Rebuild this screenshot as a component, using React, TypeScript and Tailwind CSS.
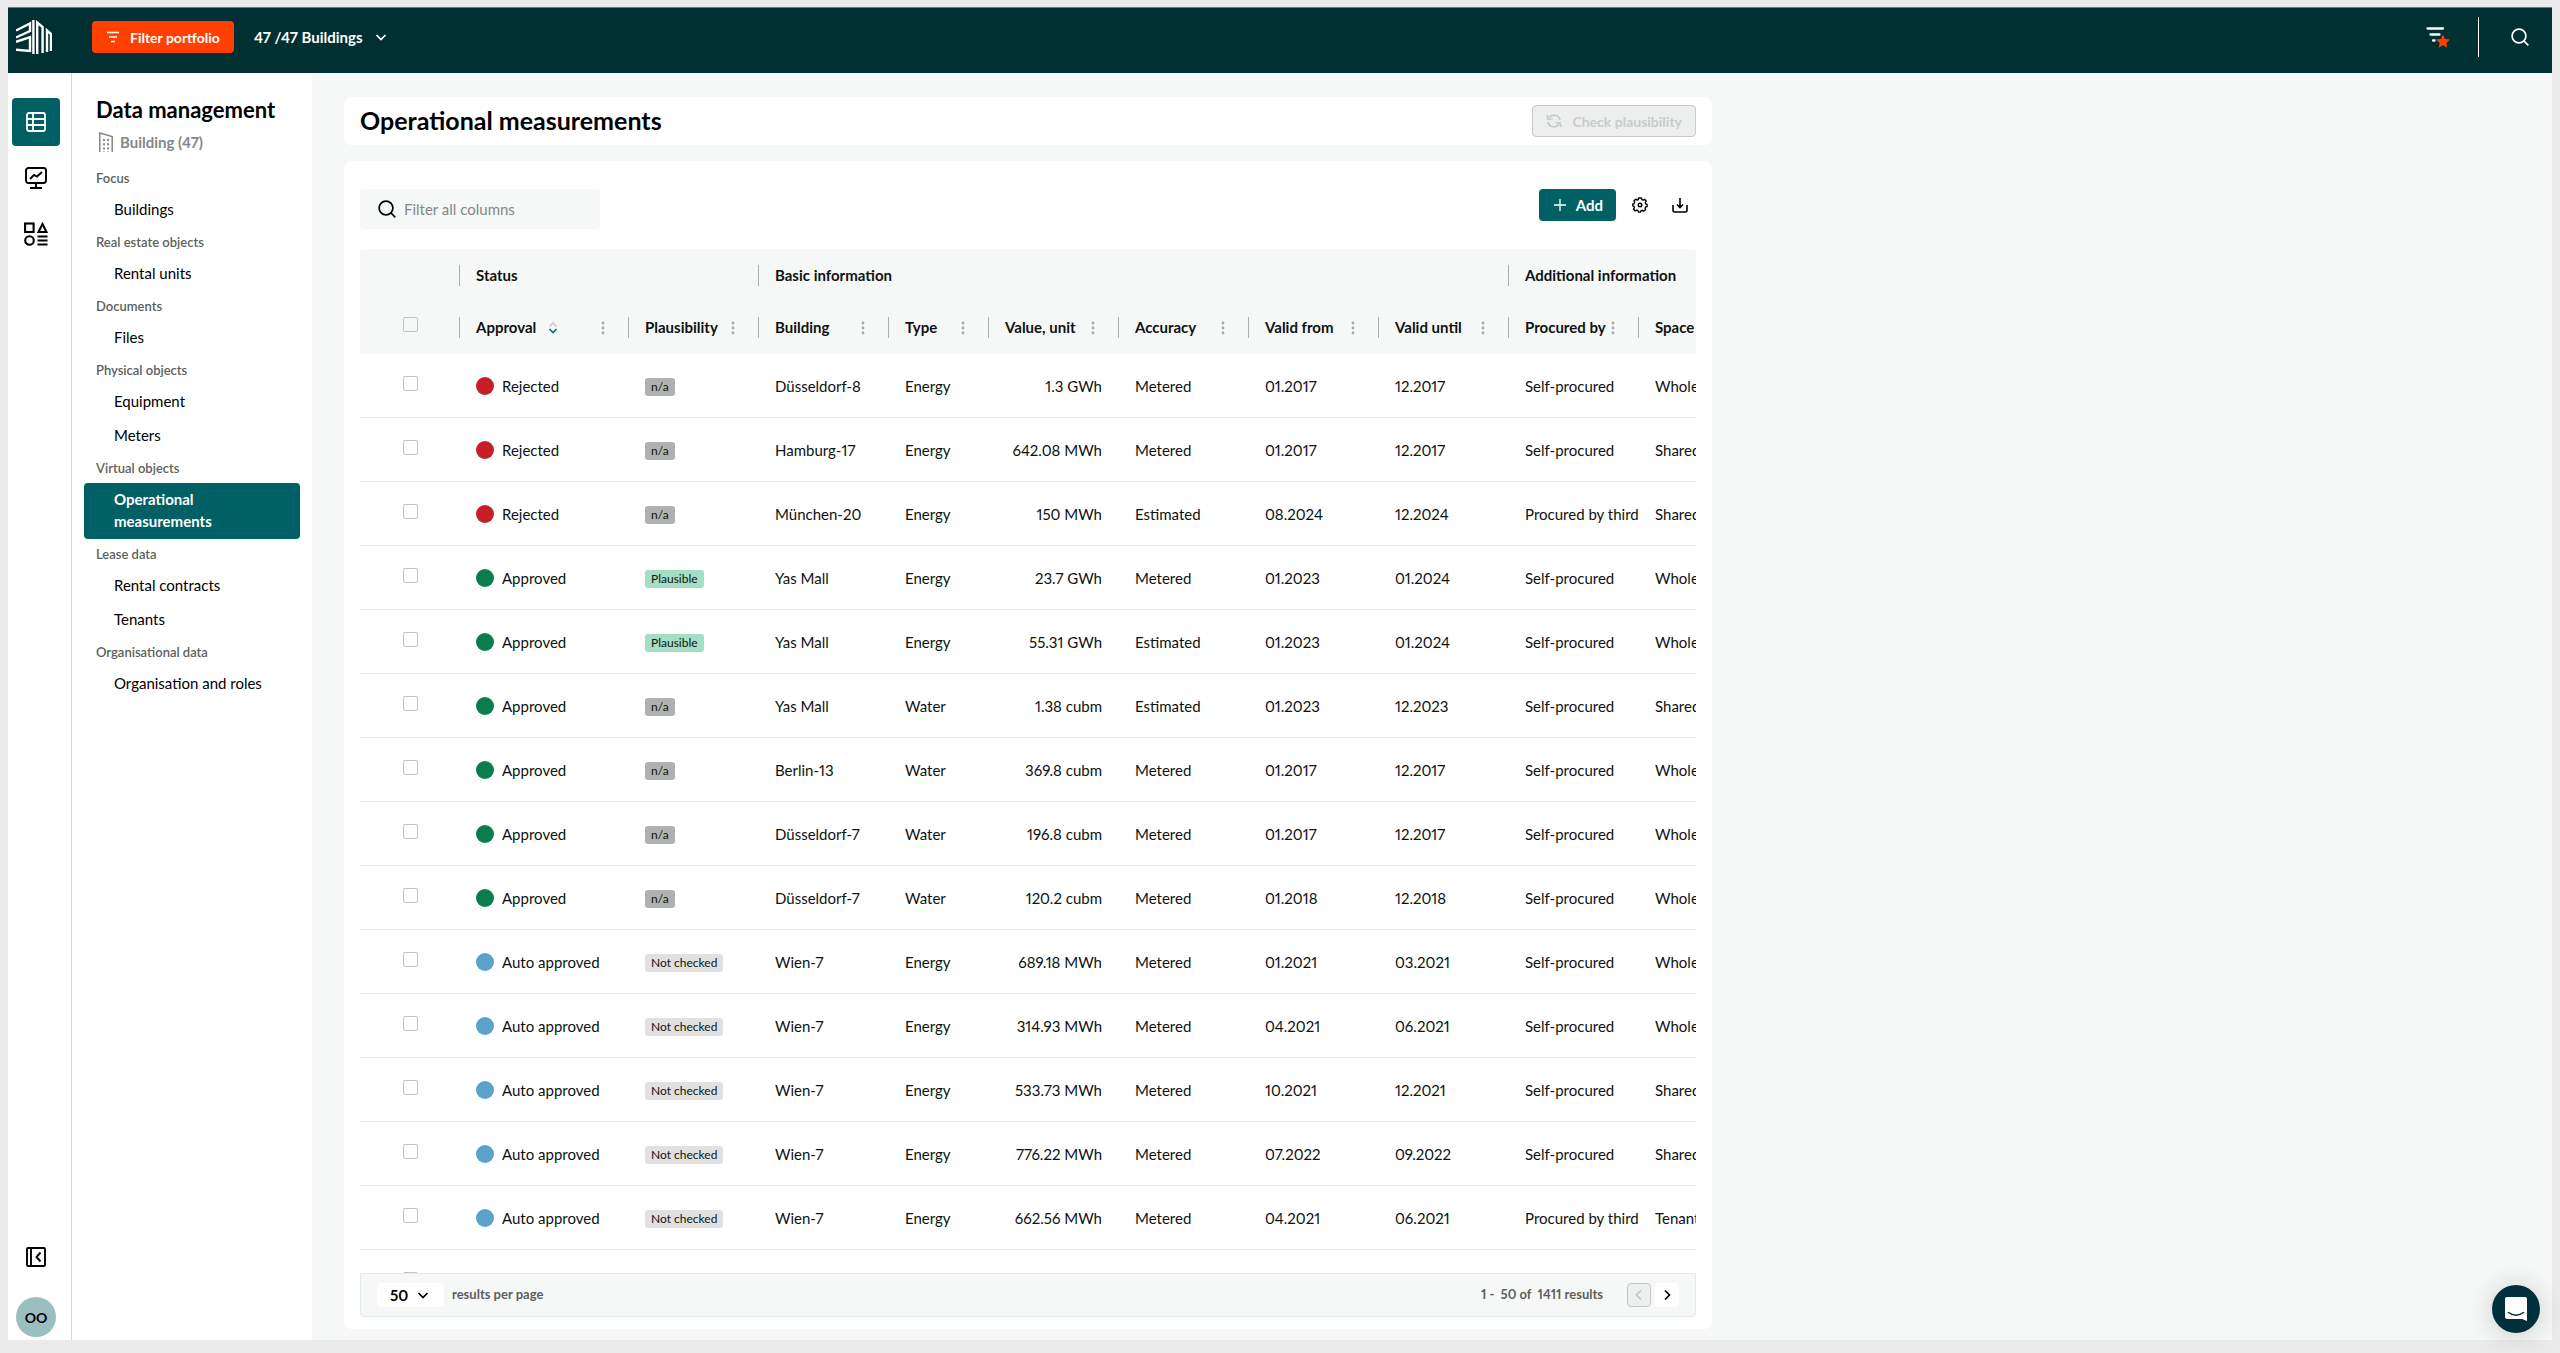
import type { ReactNode } from "react";

type Approval = "Rejected" | "Approved" | "Auto approved";
type Plausibility = "n/a" | "Plausible" | "Not checked";
type Row = [Approval, Plausibility, string, string, string, string, string, string, string, string];

const rows: Row[] = [
  ["Rejected", "n/a", "Düsseldorf-8", "Energy", "1.3 GWh", "Metered", "01.2017", "12.2017", "Self-procured", "Whole"],
  ["Rejected", "n/a", "Hamburg-17", "Energy", "642.08 MWh", "Metered", "01.2017", "12.2017", "Self-procured", "Shared"],
  ["Rejected", "n/a", "München-20", "Energy", "150 MWh", "Estimated", "08.2024", "12.2024", "Procured by third", "Shared"],
  ["Approved", "Plausible", "Yas Mall", "Energy", "23.7 GWh", "Metered", "01.2023", "01.2024", "Self-procured", "Whole"],
  ["Approved", "Plausible", "Yas Mall", "Energy", "55.31 GWh", "Estimated", "01.2023", "01.2024", "Self-procured", "Whole"],
  ["Approved", "n/a", "Yas Mall", "Water", "1.38 cubm", "Estimated", "01.2023", "12.2023", "Self-procured", "Shared"],
  ["Approved", "n/a", "Berlin-13", "Water", "369.8 cubm", "Metered", "01.2017", "12.2017", "Self-procured", "Whole"],
  ["Approved", "n/a", "Düsseldorf-7", "Water", "196.8 cubm", "Metered", "01.2017", "12.2017", "Self-procured", "Whole"],
  ["Approved", "n/a", "Düsseldorf-7", "Water", "120.2 cubm", "Metered", "01.2018", "12.2018", "Self-procured", "Whole"],
  ["Auto approved", "Not checked", "Wien-7", "Energy", "689.18 MWh", "Metered", "01.2021", "03.2021", "Self-procured", "Whole"],
  ["Auto approved", "Not checked", "Wien-7", "Energy", "314.93 MWh", "Metered", "04.2021", "06.2021", "Self-procured", "Whole"],
  ["Auto approved", "Not checked", "Wien-7", "Energy", "533.73 MWh", "Metered", "10.2021", "12.2021", "Self-procured", "Shared"],
  ["Auto approved", "Not checked", "Wien-7", "Energy", "776.22 MWh", "Metered", "07.2022", "09.2022", "Self-procured", "Shared"],
  ["Auto approved", "Not checked", "Wien-7", "Energy", "662.56 MWh", "Metered", "04.2021", "06.2021", "Procured by third", "Tenant"],
];

const dotColor: Record<Approval, string> = {
  Rejected: "bg-[#c61d27]",
  Approved: "bg-[#0a7d4b]",
  "Auto approved": "bg-[#5ba4c9]",
};

const badgeColor: Record<Plausibility, string> = {
  "n/a": "bg-[#b0b2b1]",
  Plausible: "bg-[#a3dfc4]",
  "Not checked": "bg-[#e1e1e1]",
};

const nav: { title: string; items: string[] }[] = [
  { title: "Focus", items: ["Buildings"] },
  { title: "Real estate objects", items: ["Rental units"] },
  { title: "Documents", items: ["Files"] },
  { title: "Physical objects", items: ["Equipment", "Meters"] },
  { title: "Virtual objects", items: ["Operational measurements"] },
  { title: "Lease data", items: ["Rental contracts", "Tenants"] },
  { title: "Organisational data", items: ["Organisation and roles"] },
];

const columns = ["Approval", "Plausibility", "Building", "Type", "Value, unit", "Accuracy", "Valid from", "Valid until", "Procured by", "Space"];

function Logo() {
  return (
    <svg width="36" height="34" viewBox="0 0 36 34" fill="none" stroke="#fff" strokeWidth="2.400" aria-hidden="true">
      <path d="M0 10.500L14 3.500V11L0 17.500M0 21.800L14 17.200V31L0 29.800" />
      <path d="M17.400 0V34M21.200 34V2.500L26.600 7V33M31 32V10.500L35 14V31" />
    </svg>
  );
}

function SearchIcon({ size }: { size: number }) {
  return (
    <svg width={size} height={size} viewBox="0 0 18 18" fill="none" stroke="currentColor" strokeWidth="1.700" className="shrink-0" aria-hidden="true">
      <circle cx="8" cy="8" r="6.900" />
      <path d="M13 13l4.300 4.300" />
    </svg>
  );
}

function Chevron({ dir }: { dir: "down" | "left" | "right" }) {
  const d = dir === "down" ? "M1.500 4l4.500 4.500L10.500 4" : dir === "left" ? "M8 1.500L3.500 6 8 10.500" : "M4 1.500L8.500 6 4 10.500";
  return (
    <svg width="12" height="12" viewBox="0 0 12 12" fill="none" stroke="currentColor" strokeWidth="1.700" aria-hidden="true">
      <path d={d} />
    </svg>
  );
}

function Dots() {
  return (
    <button type="button" aria-label="Column menu" className="flex h-[21px] w-2 items-center justify-center text-[#a5a7a6]">
      <svg width="4" height="14" viewBox="0 0 4 14" fill="currentColor" aria-hidden="true">
        <circle cx="2" cy="2" r="1.400" />
        <circle cx="2" cy="7" r="1.400" />
        <circle cx="2" cy="12" r="1.400" />
      </svg>
    </button>
  );
}

function Check({ label }: { label: string }) {
  return (
    <input
      type="checkbox"
      aria-label={label}
      className="block size-[15px] appearance-none rounded-[2px] border border-[#c3c5c4] bg-transparent"
    />
  );
}

function RailButton({ label, active, children }: { label: string; active?: boolean; children: ReactNode }) {
  return (
    <button
      type="button"
      aria-label={label}
      className={active ? "flex size-12 items-center justify-center rounded bg-[#006064] text-white" : "flex size-12 items-center justify-center rounded text-black"}
    >
      {children}
    </button>
  );
}

function TopBar() {
  return (
    <header className="flex h-[66px] shrink-0 items-center border-t border-[#5f7f80] bg-[#003032] pr-[23px] pb-[7px] pl-2 text-[14px] font-bold text-white">
      <a href="#" aria-label="Home" className="flex w-[76px]">
        <Logo />
      </a>
      <button type="button" className="flex h-8 items-center gap-[11px] rounded bg-[#ff4000] pr-[14px] pl-[15px]">
        <svg width="12" height="12" viewBox="0 0 12 12" stroke="currentColor" strokeWidth="1.500" aria-hidden="true">
          <path d="M0 1.500h12M2 6h8M4 10.500h4" />
        </svg>
        Filter portfolio
      </button>
      <button type="button" className="ml-5 flex h-8 items-center gap-3">
        <span className="text-[15px]">47 /47 Buildings</span>
        <Chevron dir="down" />
      </button>
      <div className="ml-auto flex items-center">
        <button type="button" aria-label="Saved filters" className="flex">
          <svg width="24" height="22" viewBox="0 0 24 22" fill="none" aria-hidden="true">
            <path d="M1.500 2.500h15.500M4.500 8.500h9M7 14.500h1.500" stroke="#fff" strokeWidth="2.300" strokeLinecap="round" />
            <path d="M17 8.500l2 4.600 5 .5-3.700 3.300 1 4.900-4.300-2.600-4.300 2.600 1-4.900-3.700-3.300 5-.5z" fill="#ff4000" />
          </svg>
        </button>
        <span className="mr-8 ml-7 h-10 w-px bg-white" />
        <button type="button" aria-label="Search" className="flex">
          <SearchIcon size={18} />
        </button>
      </div>
    </header>
  );
}

function Rail() {
  return (
    <nav aria-label="Main" className="flex w-16 shrink-0 flex-col items-center gap-2 border-r border-[#cddcdb] bg-white pt-[25px] pr-[11px] pb-[3px] pl-1">
      <RailButton label="Data management" active>
        <svg width="20" height="20" viewBox="0 0 20 20" fill="none" stroke="currentColor" strokeWidth="1.800" aria-hidden="true">
          <rect x="1" y="1" width="18" height="18" rx="2" />
          <path d="M7 1v18M1 7h18M1 13h18" />
        </svg>
      </RailButton>
      <RailButton label="Dashboards">
        <svg width="22" height="22" viewBox="0 0 22 22" fill="none" stroke="currentColor" strokeWidth="1.900" aria-hidden="true">
          <rect x="1" y="1" width="20" height="15" rx="2.500" />
          <path d="M5 12l4-4 3 1.500L17 5M11 16v4.500M5 21h12" />
        </svg>
      </RailButton>
      <RailButton label="Objects">
        <svg width="24" height="24" viewBox="0 0 24 24" fill="none" stroke="currentColor" strokeWidth="2.100" aria-hidden="true">
          <rect x="1.100" y="1.500" width="8.500" height="8.500" />
          <path d="M18.500 2l4 8h-8zM13.500 14.500h10M13.500 18.500h10M13.500 22.500h10" />
          <circle cx="5.500" cy="18.500" r="4.300" />
        </svg>
      </RailButton>
      <div className="mt-auto flex flex-col items-center gap-4">
        <RailButton label="Collapse navigation">
          <svg width="20" height="20" viewBox="0 0 20 20" fill="none" stroke="currentColor" strokeWidth="1.900" aria-hidden="true">
            <rect x="1" y="1" width="18" height="18" rx="1" />
            <path d="M5 1v18M14.500 5.500L10.500 10l4 4.500" />
          </svg>
        </RailButton>
        <button type="button" className="flex size-10 items-center justify-center rounded-full bg-[#9bbfc0] text-[14px] font-bold text-black">
          OO
        </button>
      </div>
    </nav>
  );
}

function SideNav() {
  return (
    <aside className="w-60 shrink-0 overflow-hidden bg-white px-3 pt-[23px]">
      <h2 className="px-3 text-[22px] leading-7 font-bold text-black">Data management</h2>
      <div className="flex h-9 items-center gap-[7px] px-3 text-[15px] font-bold text-[#858786]">
        <svg width="14" height="20" viewBox="0 0 14 20" fill="none" stroke="currentColor" strokeWidth="1.500" className="ml-[3px]" aria-hidden="true">
          <path d="M.800 20V1L13.200 4.500V20" />
          <path d="M5 7v13M9 7v13" strokeDasharray="2 2.200" strokeWidth="2" />
        </svg>
        Building (47)
      </div>
      <div className="pt-[3px]">
        {nav.map((group) => (
          <section key={group.title}>
            <h3 className="px-3 text-[13px] leading-[30px] font-semibold text-[#5d5f5e]">{group.title}</h3>
            <ul>
              {group.items.map((item) => (
                <li key={item}>
                  <a
                    href="#"
                    aria-current={item === "Operational measurements" ? "page" : undefined}
                    className={
                      item === "Operational measurements"
                        ? "block rounded bg-[#006064] pt-[5px] pr-16 pb-[7px] pl-[30px] text-[15px] leading-[22px] font-bold text-white"
                        : "block rounded pt-[5px] pr-2 pb-[7px] pl-[30px] text-[15px] leading-[22px] text-black"
                    }
                  >
                    {item}
                  </a>
                </li>
              ))}
            </ul>
          </section>
        ))}
      </div>
    </aside>
  );
}

function GroupHead({ span, children }: { span: number; children: string }) {
  return (
    <th colSpan={span} scope="colgroup" className="p-0 font-bold">
      <div className="flex h-[21px] items-center border-l border-[#adafae] pl-4">{children}</div>
    </th>
  );
}

function MeasurementsTable() {
  return (
    <table className="w-[1408px] table-fixed border-separate border-spacing-0 text-left text-[15px] whitespace-nowrap text-[#0e1211]">
      <colgroup>
        <col className="w-[99px]" />
        <col className="w-[169px]" />
        <col className="w-[130px]" />
        <col className="w-[130px]" />
        <col className="w-[100px]" />
        <col className="w-[130px]" />
        <col className="w-[130px]" />
        <col className="w-[130px]" />
        <col className="w-[130px]" />
        <col className="w-[130px]" />
        <col className="w-[130px]" />
      </colgroup>
      <thead className="bg-[#f6f8f7]">
        <tr className="h-[52px]">
          <td className="p-0" />
          <GroupHead span={2}>Status</GroupHead>
          <GroupHead span={6}>Basic information</GroupHead>
          <GroupHead span={2}>Additional information</GroupHead>
        </tr>
        <tr className="h-[53px]">
          <th className="pt-0 pr-0 pb-1.5 pl-[43px]">
            <Check label="Select all rows" />
          </th>
          {columns.map((name) => (
            <th key={name} scope="col" className="p-0 font-bold">
              <div className="flex h-[21px] items-center border-l border-[#adafae] pr-[21px] pl-4">
                {name}
                {name === "Approval" && (
                  <svg width="10" height="12" viewBox="0 0 10 12" fill="none" strokeWidth="1.400" className="ml-3" aria-hidden="true">
                    <path d="M1.500 4.500L5 1l3.500 3.500" stroke="#c3c5c4" />
                    <path d="M1.500 7L5 10.500 8.500 7" stroke="#00787a" strokeWidth="1.700" />
                  </svg>
                )}
                <span className="ml-auto">
                  <Dots />
                </span>
              </div>
            </th>
          ))}
        </tr>
      </thead>
      <tbody className="[&_td]:border-b [&_td]:border-[#e4ecea]">
        {rows.map(([approval, plausibility, building, type, value, accuracy, from, until, procured, space], i) => (
          <tr key={i} className="h-16">
            <td className="pt-0 pr-0 pb-1 pl-[43px]">
              <Check label={`Select row ${i + 1}`} />
            </td>
            <td className="p-0 pt-px pl-[17px]">
              <span className="flex items-center gap-2">
                <span className={`size-[18px] rounded-full ${dotColor[approval]}`} />
                {approval}
              </span>
            </td>
            <td className="p-0 pt-0.5 pl-[17px]">
              <span className={`flex h-[18px] w-fit items-center rounded-[3px] px-1.5 text-[12px] ${badgeColor[plausibility]}`}>{plausibility}</span>
            </td>
            <td className="p-0 pt-px pl-[17px]">{building}</td>
            <td className="p-0 pt-px pl-[17px]">{type}</td>
            <td className="p-0 pt-px pr-4 text-right">{value}</td>
            <td className="p-0 pt-px pl-[17px]">{accuracy}</td>
            <td className="p-0 pt-px pl-[17px]">{from}</td>
            <td className="p-0 pt-px pl-[17px]">{until}</td>
            <td className="p-0 pt-px pl-[17px]">{procured}</td>
            <td className="p-0 pt-px pl-[17px]">{space}</td>
          </tr>
        ))}
        <tr className="h-16">
          <td className="pt-0 pr-0 pb-1 pl-[43px]">
            <Check label="Select row 15" />
          </td>
          <td colSpan={10} />
        </tr>
      </tbody>
    </table>
  );
}

function Pager() {
  return (
    <footer className="flex h-11 shrink-0 items-center rounded-b border border-[#e4ecea] bg-[#f6f8f7] px-4 text-[13px] font-bold text-[#5d5f5e]">
      <label className="flex items-center gap-2">
        <span className="relative flex h-6 w-[67px] items-center rounded bg-white text-[15px] text-black">
          <select defaultValue="50" className="h-6 w-full appearance-none pl-[13px] font-bold">
            <option>25</option>
            <option>50</option>
            <option>100</option>
          </select>
          <span className="pointer-events-none absolute right-[15px]">
            <Chevron dir="down" />
          </span>
        </span>
        results per page
      </label>
      <span className="ml-auto whitespace-pre">1 -  50 of  1411 results</span>
      <button type="button" disabled aria-label="Previous page" className="ml-6 flex size-6 items-center justify-center rounded border border-[#c3c5c4] bg-[#edefee] text-[#c3c5c4]">
        <Chevron dir="left" />
      </button>
      <button type="button" aria-label="Next page" className="ml-1 flex size-6 items-center justify-center rounded bg-white text-black">
        <Chevron dir="right" />
      </button>
    </footer>
  );
}

export default function App() {
  return (
    <div className="h-screen bg-[#ebebeb] px-2 pt-[7px] pb-[13px] font-['Lato',sans-serif] proportional-nums">
      <div className="flex h-full flex-col bg-[#f6f8f7]">
        <TopBar />
        <div className="flex min-h-0 flex-1">
          <Rail />
          <SideNav />
          <main className="flex min-w-0 flex-1 flex-col gap-4 px-8 pt-6 pb-[11px]">
            <div className="flex h-12 w-full max-w-[1368px] shrink-0 items-center justify-between rounded-lg bg-white px-4">
              <h1 className="pb-[3px] text-[25px] leading-8 font-bold text-black">Operational measurements</h1>
              <button type="button" disabled className="flex h-8 items-center gap-2.5 rounded border border-[#c9cbca] bg-[#edefee] px-[13px] text-[14px] font-bold text-[#c9cbca]">
                <svg width="16" height="14" viewBox="0 0 16 14" fill="none" stroke="currentColor" strokeWidth="1.600" aria-hidden="true">
                  <path d="M14 6A6 6 0 0 0 3 4M2 8a6 6 0 0 0 11 2" />
                  <path d="M1 1l1 4.500 4.500-.5M15 13l-1-4.500-4.500.5" />
                </svg>
                Check plausibility
              </button>
            </div>
            <section className="flex min-h-0 w-full max-w-[1368px] flex-1 flex-col rounded-lg bg-white px-4 pt-7 pb-3">
              <div className="mb-5 flex items-start">
                <label className="flex h-10 w-60 items-center gap-2 rounded bg-[#f6f8f7] pl-[18px]">
                  <SearchIcon size={18} />
                  <input type="text" placeholder="Filter all columns" aria-label="Filter all columns" className="w-full bg-transparent text-[15px] outline-none placeholder:text-[#858786]" />
                </label>
                <div className="ml-auto flex items-center">
                  <button type="button" className="flex h-8 items-center gap-2.5 rounded bg-[#006064] pr-[13px] pl-[15px] text-[15px] font-bold text-white">
                    <svg width="12" height="12" viewBox="0 0 12 12" stroke="currentColor" strokeWidth="1.300" aria-hidden="true">
                      <path d="M6 0v12M0 6h12" />
                    </svg>
                    Add
                  </button>
                  <button type="button" aria-label="Settings" className="ml-4 flex">
                    <svg width="16" height="16" viewBox="0 0 16 16" fill="none" stroke="currentColor" strokeWidth="1.400" strokeLinejoin="round" aria-hidden="true">
                      <path d="M6.600 1h2.800l.5 1.600 1.200.5 1.600-.8 1.500 1.900-.9 1.400.3 1.300 1.500.6v2l-1.500.5-.6 1.200.6 1.600-1.900 1.400-1.400-.9-1.200.3-.7 1.500H6.600l-.7-1.600-1.200-.4-1.500.8-1.700-1.800.9-1.500-.4-1.200L.800 8.900V7.100l1.400-.6.5-1.200-.7-1.600 1.700-1.500 1.500.9 1.100-.5z" />
                      <circle cx="8" cy="8" r="1.800" />
                    </svg>
                  </button>
                  <button type="button" aria-label="Download" className="mr-2 ml-6 flex">
                    <svg width="16" height="16" viewBox="0 0 16 16" fill="none" stroke="currentColor" strokeWidth="1.600" aria-hidden="true">
                      <path d="M1 8v5.500c0 1 .5 1.500 1.500 1.500h11c1 0 1.500-.5 1.500-1.500V8M8 1v9.500M5 7.500l3 3 3-3" />
                    </svg>
                  </button>
                </div>
              </div>
              <div className="min-h-0 flex-1 overflow-hidden rounded-t">
                <MeasurementsTable />
              </div>
              <Pager />
            </section>
          </main>
        </div>
      </div>
      <button
        type="button"
        aria-label="Open chat"
        className="fixed right-5 bottom-5 flex size-12 items-center justify-center rounded-full bg-[#00303b] shadow-[0_2px_28px_rgba(0,0,0,0.18)]"
      >
        <svg width="22" height="24" viewBox="0 0 22 24" aria-hidden="true">
          <path d="M2.500 0h17A2.300 2.300 0 0 1 22 2.500V24l-5-2H2.500A2.300 2.300 0 0 1 0 19.500v-17A2.300 2.300 0 0 1 2.500 0z" fill="#fff" />
          <path d="M3.500 15.500c4.500 3.500 10.500 3.500 15 0" fill="none" stroke="#00303b" strokeWidth="1.500" strokeLinecap="round" />
        </svg>
      </button>
    </div>
  );
}
